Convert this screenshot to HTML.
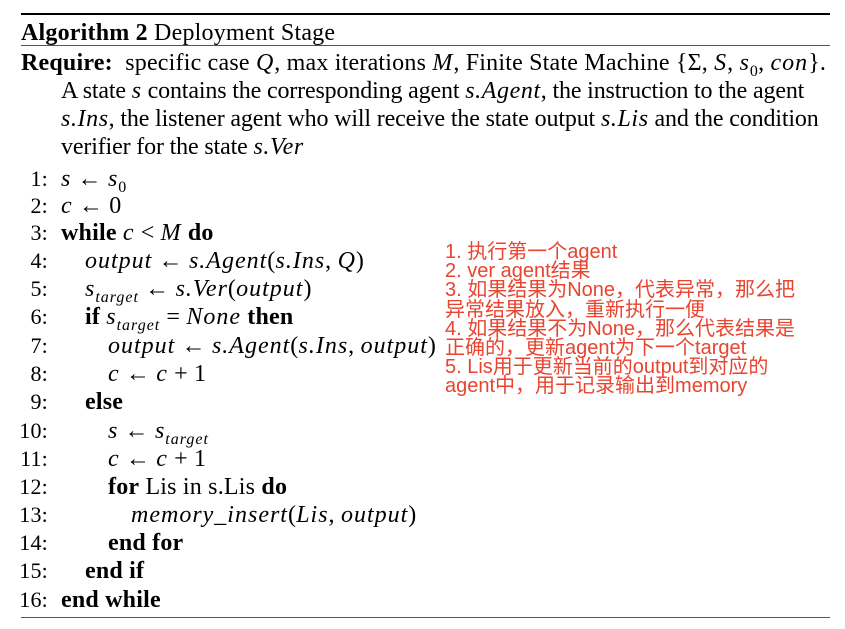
<!DOCTYPE html>
<html><head><meta charset="utf-8"><style>
body{margin:0;width:845px;height:629px;background:#fff;position:relative;overflow:hidden;font-family:"Liberation Serif",serif;color:#000;font-size:24px}
.r{position:absolute;left:21px;width:809px;background:#000}
.l{position:absolute;white-space:nowrap;line-height:26px;letter-spacing:0.2px}
.n{position:absolute;width:48px;left:0;text-align:right;font-size:22px}
i{font-style:italic;letter-spacing:1px}
.p{letter-spacing:-0.15px}
.p i{letter-spacing:0.6px}
.t{position:absolute;left:445px;color:#e8442f;font-family:"Liberation Sans","Noto Sans CJK SC",sans-serif;font-size:20px;line-height:19.2px;white-space:nowrap}
sub{font-size:16px;line-height:0}
</style></head><body>
<div class="r" style="top:13px;height:2px"></div>
<div class="l" style="left:21px;top:20px"><b>Algorithm 2</b> Deployment Stage</div>
<div class="r" style="top:45px;height:1px;background:#555"></div>
<div class="l" style="left:21px;top:50px"><b>Require:</b>&nbsp; specific case <i>Q</i>, max iterations <i>M</i>, Finite State Machine {Σ, <i>S</i>, <i>s</i><sub>0</sub>, <i>con</i>}.</div>
<div class="l p" style="left:61px;top:78px">A state <i>s</i> contains the corresponding agent <i>s.Agent</i>, the instruction to the agent</div>
<div class="l p" style="left:61px;top:106px"><i>s.Ins</i>, the listener agent who will receive the state output <i>s.Lis</i> and the condition</div>
<div class="l p" style="left:61px;top:134px">verifier for the state <i>s.Ver</i></div>

<div class="l" style="left:0;top:166px;width:845px"><span class="n">1:</span><span style="position:absolute;left:61px"><i>s</i> ← <i>s</i><sub>0</sub></span></div>
<div class="l" style="left:0;top:193px;width:845px"><span class="n">2:</span><span style="position:absolute;left:61px"><i>c</i> ← 0</span></div>
<div class="l" style="left:0;top:220px;width:845px"><span class="n">3:</span><span style="position:absolute;left:61px"><b>while</b> <i>c</i> &lt; <i>M</i> <b>do</b></span></div>
<div class="l" style="left:0;top:248px;width:845px"><span class="n">4:</span><span style="position:absolute;left:85px"><i>output</i> ← <i>s.Agent</i>(<i>s.Ins</i>, <i>Q</i>)</span></div>
<div class="l" style="left:0;top:276px;width:845px"><span class="n">5:</span><span style="position:absolute;left:85px"><i>s<sub>target</sub></i> ← <i>s.Ver</i>(<i>output</i>)</span></div>
<div class="l" style="left:0;top:304px;width:845px"><span class="n">6:</span><span style="position:absolute;left:85px"><b>if</b> <i>s<sub>target</sub></i> = <i>None</i> <b>then</b></span></div>
<div class="l" style="left:0;top:333px;width:845px"><span class="n">7:</span><span style="position:absolute;left:108px"><i>output</i> ← <i>s.Agent</i>(<i>s.Ins</i>, <i>output</i>)</span></div>
<div class="l" style="left:0;top:361px;width:845px"><span class="n">8:</span><span style="position:absolute;left:108px"><i>c</i> ← <i>c</i> + 1</span></div>
<div class="l" style="left:0;top:389px;width:845px"><span class="n">9:</span><span style="position:absolute;left:85px"><b>else</b></span></div>
<div class="l" style="left:0;top:418px;width:845px"><span class="n">10:</span><span style="position:absolute;left:108px"><i>s</i> ← <i>s<sub>target</sub></i></span></div>
<div class="l" style="left:0;top:446px;width:845px"><span class="n">11:</span><span style="position:absolute;left:108px"><i>c</i> ← <i>c</i> + 1</span></div>
<div class="l" style="left:0;top:474px;width:845px"><span class="n">12:</span><span style="position:absolute;left:108px"><b>for</b> Lis in s.Lis <b>do</b></span></div>
<div class="l" style="left:0;top:502px;width:845px"><span class="n">13:</span><span style="position:absolute;left:131px"><i>memory_insert</i>(<i>Lis</i>, <i>output</i>)</span></div>
<div class="l" style="left:0;top:530px;width:845px"><span class="n">14:</span><span style="position:absolute;left:108px"><b>end for</b></span></div>
<div class="l" style="left:0;top:558px;width:845px"><span class="n">15:</span><span style="position:absolute;left:85px"><b>end if</b></span></div>
<div class="l" style="left:0;top:587px;width:845px"><span class="n">16:</span><span style="position:absolute;left:61px"><b>end while</b></span></div>
<div class="r" style="top:617px;height:1px;background:#555"></div>

<div class="t" style="top:243px">1. 执行第一个agent<br>2. ver agent结果<br>3. 如果结果为None，代表异常，那么把<br>异常结果放入，重新执行一便<br>4. 如果结果不为None，那么代表结果是<br>正确的，更新agent为下一个target<br>5. Lis用于更新当前的output到对应的<br>agent中，用于记录输出到memory</div>
</body></html>
